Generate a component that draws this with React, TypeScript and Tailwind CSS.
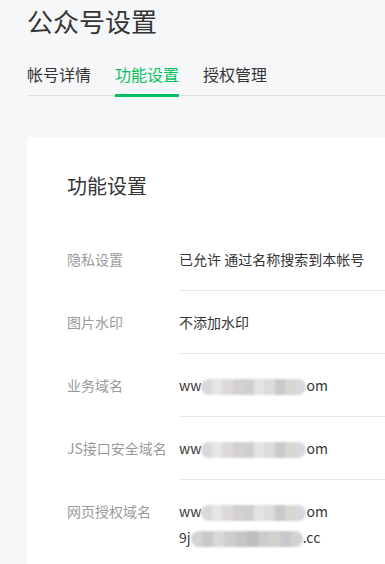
const font = '"Noto Sans CJK SC", "Noto Sans", sans-serif';

const tabs = ['帐号详情', '功能设置', '授权管理'];

// mosaic blocks standing in for the blurred part of the domains
const mosaicA = ['#d9d9dc', '#e6e6e8', '#dcdadb', '#d4d0d0', '#cfcfd2', '#e3e3e5', '#dcdcde', '#c9c9cb', '#d8d6d3', '#d6d9de'];
const mosaicB = ['#d3d3d5', '#c9c9cb', '#d9d9db', '#cfcccc', '#c6c6c9', '#bdbdbf', '#cbcbcd', '#d3d0ce', '#c8c8cc', '#d2d2d4'];

function Blur({ colors, w = 105 }: { colors: string[]; w?: number }) {
  return (
    <span className="inline-flex align-middle h-[16px] overflow-hidden rounded-full blur-[1px]" style={{ width: w }}>
      {colors.map((c, i) => (
        <span key={i} className="flex-1 h-full" style={{ background: c }} />
      ))}
    </span>
  );
}

type Row = { label: string; value: React.ReactNode };

const rows: Row[] = [
  { label: '隐私设置', value: '已允许 通过名称搜索到本帐号' },
  { label: '图片水印', value: '不添加水印' },
  {
    label: '业务域名',
    value: (
      <>
        ww<Blur colors={mosaicA} />om
      </>
    ),
  },
  {
    label: 'JS接口安全域名',
    value: (
      <>
        ww<Blur colors={mosaicA} />om
      </>
    ),
  },
  {
    label: '网页授权域名',
    value: (
      <>
        <div>
          ww<Blur colors={mosaicA} />om
        </div>
        <div>
          9j<Blur colors={mosaicB} w={112} />.cc
        </div>
      </>
    ),
  },
];

export default function App() {
  return (
    <div className="h-[564px] bg-[#f6f7f9] overflow-hidden" style={{ fontFamily: font }}>
      <div className="pl-[27px] pt-[3px]">
        <h1 className="text-[26px] leading-[36px] text-[#353535]">公众号设置</h1>

        {/* Tabs */}
        <div className="mt-[23px] flex gap-6 border-b border-[#e2e2e4]">
          {tabs.map((t, i) => (
            <div
              key={t}
              className={
                i === 1
                  ? 'pb-[8px] text-[16px] leading-[24px] text-[#07c160] border-b-[3px] border-[#07c160] -mb-[2px]'
                  : 'pb-[8px] text-[16px] leading-[24px] text-[#353535] border-b-[3px] border-transparent -mb-[2px]'
              }
            >
              {t}
            </div>
          ))}
        </div>

        {/* Card */}
        <div className="mt-[41px] bg-white rounded-l-[4px] pl-[40px] pt-[35px] pb-6">
          <h2 className="text-[20px] leading-[28px] text-[#353535]">功能设置</h2>

          <div className="mt-[28px]">
            {rows.map((r, i) => (
              <div key={r.label} className="flex text-[14px] leading-[26px]">
                <div className="w-[112px] shrink-0 py-[18px] text-[#9a9a9a]">{r.label}</div>
                <div
                  className={
                    i < rows.length - 1
                      ? 'flex-1 py-[18px] text-[#353535] border-b border-[#e7e7eb]'
                      : 'flex-1 py-[18px] text-[#353535]'
                  }
                >
                  {r.value}
                </div>
              </div>
            ))}
          </div>
        </div>
      </div>
    </div>
  );
}
